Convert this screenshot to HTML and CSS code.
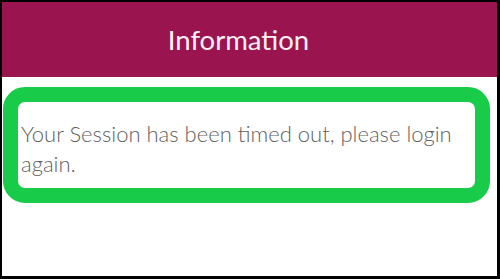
FILE: index.html
```html
<!DOCTYPE html>
<html>
<head>
<meta charset="utf-8">
<link rel="stylesheet" href="styles.css">
</head>
<body>
<div class="frame">
  <div class="screen">
    <header class="topbar">
      <h1 class="title">Information</h1>
    </header>
    <main class="content">
      <div class="highlight">
        <p class="message">Your Session has been timed out, please login again.</p>
      </div>
    </main>
  </div>
</div>
</body>
</html>
```

FILE: styles.css
```css
html, body {
  margin: 0;
  padding: 0;
  background: #000;
  width: 500px;
  height: 279px;
  overflow: hidden;
}
.frame {
  box-sizing: border-box;
  width: 500px;
  height: 279px;
  padding: 2px 3px 3px 2px;
}
.screen {
  width: 100%;
  height: 100%;
  background: #fff;
  display: flex;
  flex-direction: column;
}
.topbar {
  height: 75px;
  background: #9a144f;
  display: flex;
  align-items: center;
  justify-content: center;
  flex-shrink: 0;
  padding-right: 22px;
}
.title {
  margin: 0;
  font-family: Lato, "Liberation Sans", sans-serif;
  font-weight: 400;
  font-size: 27.5px;
  color: #fdf0f6;
}
.content {
  padding: 10px 7px 0 1px;
}
.highlight {
  box-sizing: content-box;
  border: 15px solid #18cc4a;
  border-radius: 22px;
  height: 69px;
  padding: 17px 2px 0 3px;
}
.message {
  margin: 0;
  font-family: Lato, "Liberation Sans", sans-serif;
  font-weight: 300;
  font-size: 22px;
  line-height: 30px;
  color: #5f5f5f;
}
```
